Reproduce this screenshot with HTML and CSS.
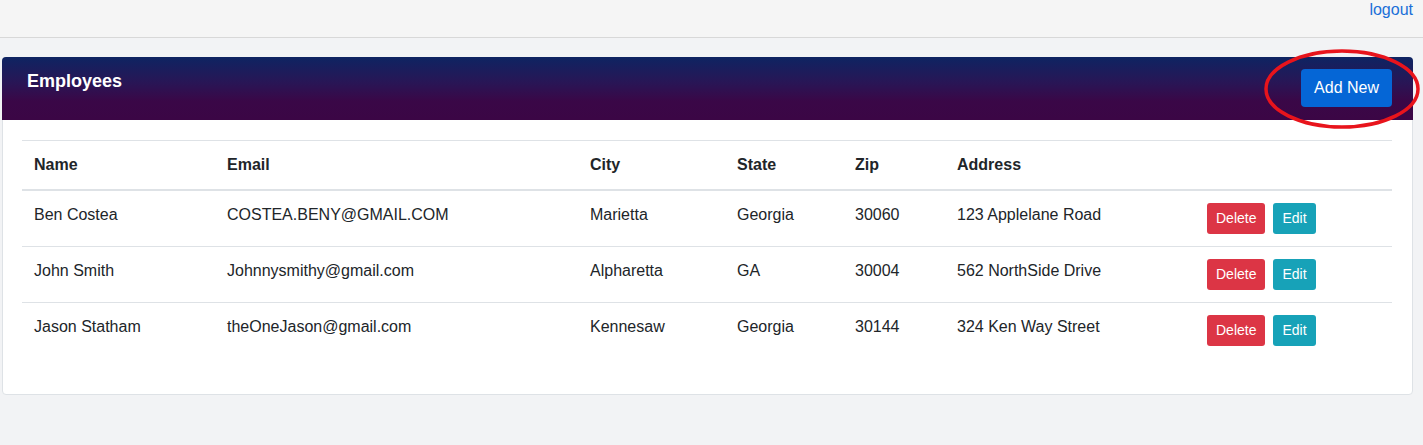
FILE: index.html
```html
<!DOCTYPE html>
<html>
<head>
<meta charset="utf-8">
<title>Employees</title>
<link rel="stylesheet" href="styles.css">
</head>
<body>
<div class="topbar"><a class="logout" href="#">logout</a></div>
<main class="page">
  <section class="card">
    <div class="card-header">
      <h5 class="title">Employees</h5>
      <button class="btn btn-primary">Add New</button>
      <svg class="annot" width="160" height="90" viewBox="0 0 160 90"><ellipse cx="80" cy="45" rx="76" ry="38" fill="none" stroke="#e8141c" stroke-width="3.5"/></svg>
    </div>
    <div class="card-body">
      <table class="table">
        <colgroup>
          <col class="c-name"><col class="c-email"><col class="c-city"><col class="c-state"><col class="c-zip"><col class="c-addr"><col class="c-act">
        </colgroup>
        <thead>
          <tr><th>Name</th><th>Email</th><th>City</th><th>State</th><th>Zip</th><th>Address</th><th></th></tr>
        </thead>
        <tbody>
          <tr><td>Ben Costea</td><td>COSTEA.BENY@GMAIL.COM</td><td>Marietta</td><td>Georgia</td><td>30060</td><td>123 Applelane Road</td><td class="actions"><button class="btn-sm btn-danger">Delete</button><button class="btn-sm btn-info">Edit</button></td></tr>
          <tr><td>John Smith</td><td>Johnnysmithy@gmail.com</td><td>Alpharetta</td><td>GA</td><td>30004</td><td>562 NorthSide Drive</td><td class="actions"><button class="btn-sm btn-danger">Delete</button><button class="btn-sm btn-info">Edit</button></td></tr>
          <tr><td>Jason Statham</td><td>theOneJason@gmail.com</td><td>Kennesaw</td><td>Georgia</td><td>30144</td><td>324 Ken Way Street</td><td class="actions"><button class="btn-sm btn-danger">Delete</button><button class="btn-sm btn-info">Edit</button></td></tr>
        </tbody>
      </table>
    </div>
  </section>
</main>
</body>
</html>
```

FILE: styles.css
```css
* { box-sizing: border-box; }
html, body { margin: 0; padding: 0; }
body {
  font-family: "Liberation Sans", Arial, sans-serif;
  font-size: 16px;
  line-height: 24px;
  color: #212529;
  background: #f2f3f5;
  height: 445px;
  overflow: hidden;
}
.topbar {
  height: 38px;
  background: #f5f5f5;
  border-bottom: 1px solid #d8d8d8;
  display: flex;
  justify-content: flex-end;
  align-items: flex-start;
  padding: 0 10px 0 0;
}
.logout {
  color: #1a6fd8;
  text-decoration: none;
  font-size: 16px;
  line-height: 20px;
}
.page {
  padding: 19px 10px 0 2px;
}
.card {
  background: #fff;
  border: 1px solid #dee2e6;
  border-radius: 4px;
  width: 1411px;
}
.card-header {
  position: relative;
  height: 63px;
  margin: -1px -1px 0 -1px;
  border-radius: 4px 4px 0 0;
  background: linear-gradient(to bottom, #0e2462 0%, #281656 40%, #3a0747 70%, #3b0645 100%);
  display: flex;
  justify-content: space-between;
  align-items: flex-start;
  padding: 12px 21px 0 25px;
}
.title {
  margin: 0;
  color: #fff;
  font-size: 18px;
  font-weight: 700;
  line-height: 24px;
}
.btn {
  font-family: inherit;
  border: 0;
  border-radius: 4px;
  font-size: 16px;
  line-height: 24px;
  padding: 7px 13px;
  height: 38px;
  cursor: pointer;
}
.btn-primary { background: #0566d6; color: #fff; }
.annot {
  position: absolute;
  right: -9px;
  top: -13px;
  pointer-events: none;
}
.card-body {
  padding: 20px 20px 20px 19px;
}
.table {
  width: 1370px;
  border-collapse: collapse;
  table-layout: fixed;
  margin-bottom: 16px;
}
.c-name { width: 193px; }
.c-email { width: 363px; }
.c-city { width: 147px; }
.c-state { width: 118px; }
.c-zip { width: 102px; }
.c-addr { width: 250px; }
.c-act { width: 197px; }
.table th, .table td {
  text-align: left;
  vertical-align: top;
  padding: 12px 12px;
  white-space: nowrap;
}
.table th {
  font-weight: 700;
  border-top: 1px solid #dee2e6;
  border-bottom: 2px solid #dee2e6;
}
.table tbody tr + tr td {
  border-top: 1px solid #dee2e6;
}
.actions {
  display: flex;
  gap: 8px;
}
.btn-sm {
  font-family: inherit;
  border: 0;
  border-radius: 3px;
  font-size: 14px;
  line-height: 21px;
  padding: 5px 9px;
  height: 31px;
  color: #fff;
  cursor: pointer;
}
.btn-danger { background: #dc3545; }
.btn-info { background: #17a2b8; }
```
